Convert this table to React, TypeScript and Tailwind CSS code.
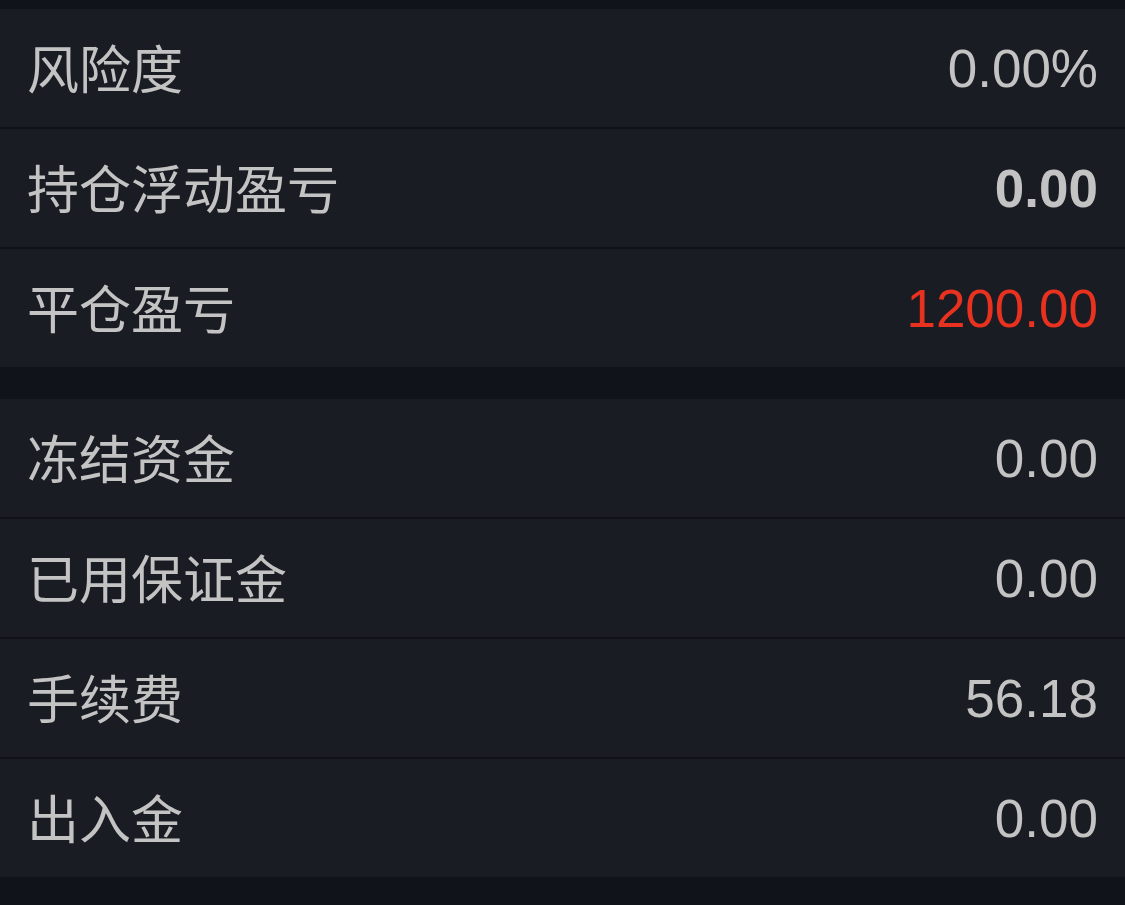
import React from "react";

type Row = { label: string; value: string; tone?: "bold" | "red" };

const groupA: Row[] = [
    { label: "风险度", value: "0.00%" },
    { label: "持仓浮动盈亏", value: "0.00", tone: "bold" },
    { label: "平仓盈亏", value: "1200.00", tone: "red" },
];

const groupB: Row[] = [
    { label: "冻结资金", value: "0.00" },
    { label: "已用保证金", value: "0.00" },
    { label: "手续费", value: "56.18" },
    { label: "出入金", value: "0.00" },
];

function Group({ rows }: { rows: Row[] }) {
    return (
        <div className="flex flex-col">
            {rows.map((r, i) => (
                <div
                    key={r.label}
                    className={
                        "flex items-center justify-between px-[27px] bg-[#1a1c23] " +
                        (i < rows.length - 1 ? "h-[120px] border-b-2 border-[#101218]" : "h-[118px]")
                    }
                >
                    <div className="text-[52px] text-[#c3c3c3] font-['Noto_Sans_CJK_SC',sans-serif] leading-none -mt-[3px]">
                        {r.label}
                    </div>
                    <div
                        className={
                            "text-[53px] font-['Liberation_Sans',Arial,sans-serif] leading-none " +
                            (r.tone === "red"
                                ? "text-[#e8321f]"
                                : r.tone === "bold"
                                ? "text-[#c3c3c3] font-bold"
                                : "text-[#c3c3c3]")
                        }
                    >
                        {r.value}
                    </div>
                </div>
            ))}
        </div>
    );
}

export default function App(): React.JSX.Element {
    return (
        <div className="w-[1125px] h-[905px] bg-[#11131a] pt-[9px] flex flex-col gap-[32px] overflow-hidden">
            <Group rows={groupA} />
            <Group rows={groupB} />
        </div>
    );
}
